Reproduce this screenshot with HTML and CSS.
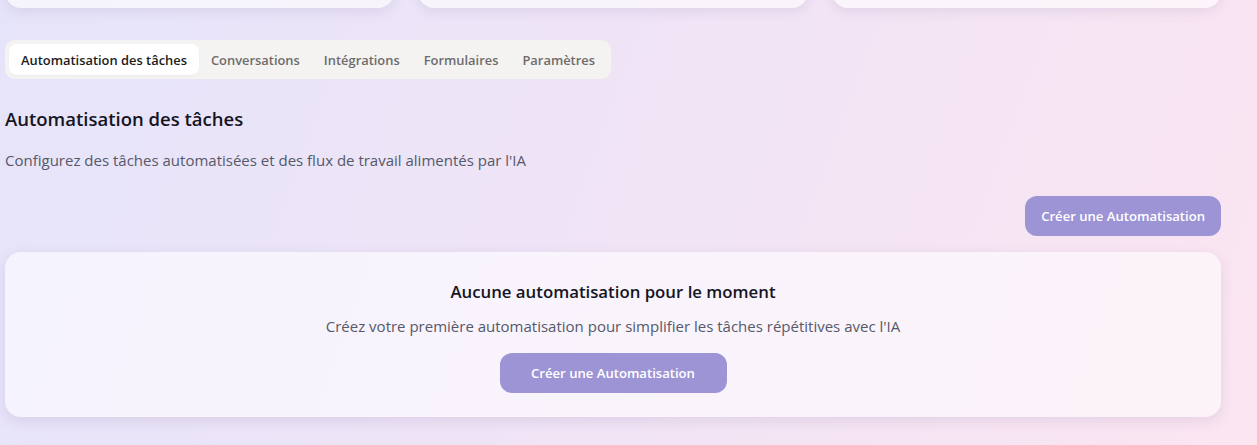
FILE: index.html
```html
<!DOCTYPE html>
<html lang="fr">
<head>
<meta charset="utf-8">
<title>Automatisation des tâches</title>
<link rel="stylesheet" href="styles.css">
</head>
<body>
<div class="page">
  <div class="stats">
    <div class="stat-card"></div>
    <div class="stat-card"></div>
    <div class="stat-card"></div>
  </div>

  <nav class="tabs">
    <button class="tab active">Automatisation des tâches</button>
    <button class="tab">Conversations</button>
    <button class="tab">Intégrations</button>
    <button class="tab">Formulaires</button>
    <button class="tab">Paramètres</button>
  </nav>

  <section class="section">
    <h2 class="section-title">Automatisation des tâches</h2>
    <p class="section-desc">Configurez des tâches automatisées et des flux de travail alimentés par l'IA</p>
    <div class="actions">
      <button class="btn-primary">Créer une Automatisation</button>
    </div>
    <div class="empty-card">
      <h3 class="empty-title">Aucune automatisation pour le moment</h3>
      <p class="empty-desc">Créez votre première automatisation pour simplifier les tâches répétitives avec l'IA</p>
      <button class="btn-primary btn-wide">Créer une Automatisation</button>
    </div>
  </section>
</div>
</body>
</html>
```

FILE: styles.css
```css
* { box-sizing: border-box; }
html, body { height: 100%; }
body {
  margin: 0;
  font-family: "Open Sans", "Noto Sans", sans-serif;
  background: linear-gradient(110deg, #e6e4fa 0%, #efe4f6 45%, #fbe5f1 100%);
  color: #1b1b24;
  overflow: hidden;
}
.page {
  width: 1216px;
  margin-left: 5px;
}
.stats {
  display: grid;
  grid-template-columns: repeat(3, 1fr);
  gap: 24px;
  margin-top: -92px;
}
.stat-card {
  height: 100px;
  border-radius: 16px;
  background: rgba(255, 255, 255, 0.6);
  box-shadow: 0 4px 12px rgba(110, 90, 150, 0.12);
}
.tabs {
  display: inline-flex;
  margin-top: 32px;
  padding: 4px;
  background: #f4f3f2;
  border-radius: 10px;
}
.tab {
  border: 0;
  background: transparent;
  font-family: inherit;
  font-size: 12.9px;
  font-weight: 600;
  color: #6e6b6b;
  height: 31px;
  padding: 0 12px;
  border-radius: 8px;
  cursor: pointer;
}
.tab.active {
  background: #ffffff;
  color: #1c1c1c;
  box-shadow: 0 1px 2px rgba(0,0,0,0.04);
}
.section-title {
  margin: 27px 0 0;
  font-size: 18.5px;
  font-weight: 600;
  line-height: 26px;
  color: #15151f;
}
.section-desc {
  margin: 18px 0 0;
  font-size: 15px;
  line-height: 20px;
  color: #55596a;
}
.actions {
  display: flex;
  justify-content: flex-end;
  margin-top: 26px;
}
.btn-primary {
  border: 0;
  height: 40px;
  padding: 0 16px;
  border-radius: 12px;
  background: #9d94d6;
  color: #ffffff;
  font-family: inherit;
  font-size: 13.1px;
  font-weight: 600;
  cursor: pointer;
}
.empty-card {
  margin-top: 16px;
  height: 165px;
  border-radius: 16px;
  background: linear-gradient(110deg, rgba(247,245,255,0.9), rgba(253,245,250,0.9));
  box-shadow: 0 4px 14px rgba(110, 90, 150, 0.14);
  display: flex;
  flex-direction: column;
  align-items: center;
  padding-top: 28px;
}
.empty-title {
  margin: 0;
  font-size: 16.8px;
  font-weight: 600;
  line-height: 24px;
  color: #15151f;
}
.empty-desc {
  margin: 12px 0 0;
  font-size: 15px;
  line-height: 20px;
  color: #55596a;
}
.btn-wide {
  margin-top: 17px;
  width: 227px;
}
```
